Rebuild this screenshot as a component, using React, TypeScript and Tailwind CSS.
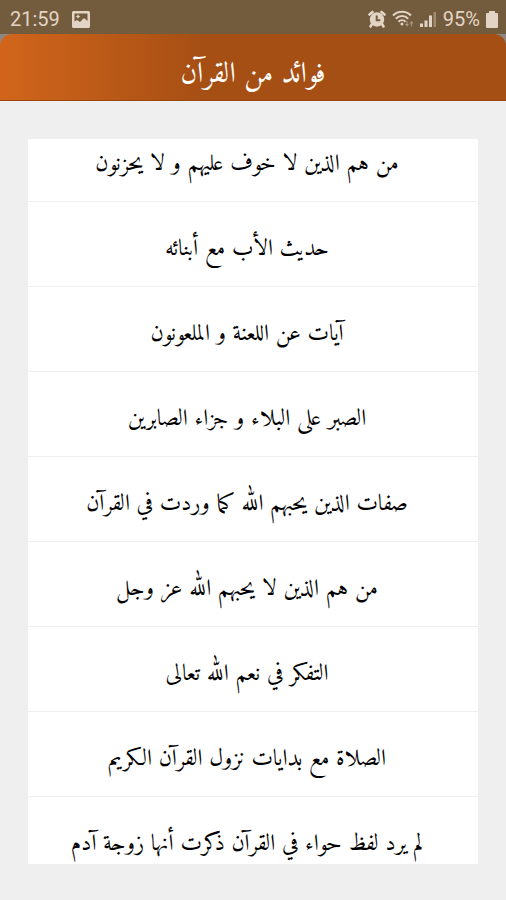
const TOPICS = [
  'من هم الذين لا خوف عليهم و لا يحزنون',
  'حديث الأب مع أبنائه',
  'آيات عن اللعنة و الملعونون',
  'الصبر على البلاء و جزاء الصابرين',
  'صفات الذين يحبهم الله كما وردت في القرآن',
  'من هم الذين لا يحبهم الله عز وجل',
  'التفكر في نعم الله تعالى',
  'الصلاة مع بدايات نزول القرآن الكريم',
  'لم يرد لفظ حواء في القرآن ذكرت أنها زوجة آدم',
];

// ── Status bar icons ─────────────────────────────────────────

function PictureIcon() {
  return (
    <svg viewBox="0 0 18 17" className="w-[18px] h-[17px]" fill="currentColor" aria-hidden="true">
      <path
        fillRule="evenodd"
        d="M1.5 0h15A1.5 1.5 0 0 1 18 1.5v14a1.5 1.5 0 0 1-1.5 1.5h-15A1.5 1.5 0 0 1 0 15.5v-14A1.5 1.5 0 0 1 1.5 0ZM2.500 2.500v8l2.500-1.500 3 2 4-4 3.500 3V2.500Z"
      />
      <path d="m6 3 .8 1.700 1.700.8-1.700.8L6 8l-.8-1.700-1.700-.8 1.700-.8Z" />
    </svg>
  );
}

function AlarmIcon() {
  return (
    <svg viewBox="0 0 18 18" className="w-[18px] h-[18px]" aria-hidden="true">
      <path d="M1.500 4.500 4.500 2M16.500 4.500 13.500 2" stroke="currentColor" strokeWidth="2.600" strokeLinecap="round" />
      <path d="m4 14-1.500 2.500M14 14l1.500 2.500" stroke="currentColor" strokeWidth="2.600" strokeLinecap="round" />
      <circle cx="9" cy="9.500" r="7.200" fill="currentColor" />
      <path d="M8.700 5.500v4.700h3.600" stroke="#735b3d" strokeWidth="2" fill="none" />
    </svg>
  );
}

function WifiIcon() {
  return (
    <svg viewBox="0 0 22 18" className="w-[22px] h-[18px]" fill="none" stroke="currentColor" aria-hidden="true">
      <path d="M1 5.500c5-5 13-5 18 0" strokeWidth="2" />
      <path d="M3.800 8.700c3.500-3.500 9-3.500 12.400 0" strokeWidth="2" />
      <path d="M6.500 11.700c2-2 5-2 7 0" strokeWidth="2" />
      <circle cx="10" cy="14" r="1.500" fill="currentColor" stroke="none" />
      <path d="m13 14 2 3 2-3ZM17.500 13.500l2-3 2 3Z" fill="currentColor" stroke="none" opacity="0.4" />
      <path d="M15 11v4M19.500 12.500v4" strokeWidth="1.400" opacity="0.4" />
    </svg>
  );
}

function SignalIcon() {
  return (
    <svg viewBox="0 0 17 16" className="w-[17px] h-4" fill="currentColor" aria-hidden="true">
      <path d="M0 12.500h3V16H0ZM4.500 9.500h3V16h-3ZM9 4.500h3V16H9Z" />
      <path d="M13.500 1h2.500v15h-2.500Z" opacity="0.4" />
    </svg>
  );
}

function BatteryIcon() {
  return (
    <svg viewBox="0 0 12 17" className="w-3 h-[17px]" fill="currentColor" aria-hidden="true">
      <path d="M3 0h6v2h2a1 1 0 0 1 1 1v13a1 1 0 0 1-1 1H1a1 1 0 0 1-1-1V3a1 1 0 0 1 1-1h2Z" />
    </svg>
  );
}

function StatusBar() {
  return (
    <div className="flex h-[34px] shrink-0 items-center justify-between bg-[#735b3d] pt-1 pr-2 pl-2.5 font-[Roboto,sans-serif] text-[20px] text-[#e3d5c5]">
      <div className="flex items-center gap-3">
        <span>21:59</span>
        <PictureIcon />
      </div>
      <div className="flex items-center gap-1.5">
        <AlarmIcon />
        <WifiIcon />
        <SignalIcon />
        <span>95%</span>
        <BatteryIcon />
      </div>
    </div>
  );
}

// ── Main page ────────────────────────────────────────────────

export default function App() {
  return (
    <div className="flex h-screen flex-col bg-[#efefef]">
      <StatusBar />

      {/* Header */}
      <div className="shrink-0 bg-[#8b8784]">
        <header
          dir="rtl"
          className="flex h-[67px] items-center justify-center rounded-t-xl border-b border-[#9a4611] bg-linear-to-r from-[#d2651b] to-[#a64f14] to-40% pt-4"
        >
          <h1 className="font-[Amiri,'Noto_Naskh_Arabic','DejaVu_Sans',sans-serif] text-[29px] text-white">
            فوائد من القرآن
          </h1>
        </header>
      </div>

      {/* Topics, scrolled a little past the first row */}
      <main dir="rtl" className="mx-7 mt-[38px] mb-9 min-h-0 flex-1 overflow-hidden bg-white">
        <ul className="-mt-[22px] divide-y divide-[#efefef]">
          {TOPICS.map((topic) => (
            <li key={topic}>
              <button
                type="button"
                className="flex h-[84px] w-full items-center justify-center pt-3 pr-3 whitespace-nowrap font-[Amiri,'Noto_Naskh_Arabic','DejaVu_Sans',sans-serif] text-[23px] text-black"
              >
                {topic}
              </button>
            </li>
          ))}
        </ul>
      </main>
    </div>
  );
}
